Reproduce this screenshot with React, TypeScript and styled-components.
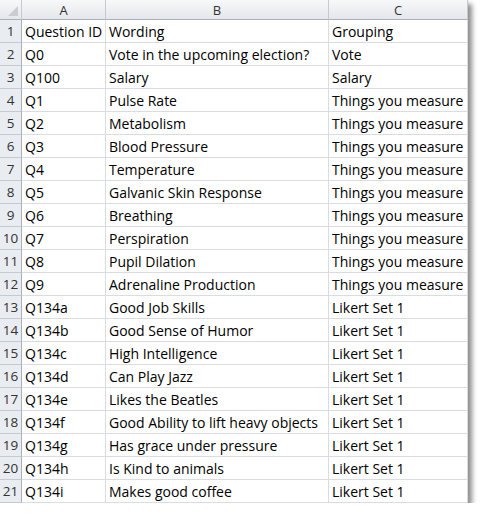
import React from "react";
import styled, { createGlobalStyle } from "styled-components";

const G = createGlobalStyle`
  body { margin: 0; background: #fff; font-family: "Open Sans", "Liberation Sans", sans-serif; }
`;
const Sheet = styled.div`
  width: 468px;
  box-shadow: 4px 4px 5px rgba(0,0,0,0.45);
  display: grid;
  grid-template-columns: 22px 84px 223px 139px;
  background: #fff;
`;
const Head = styled.div`
  height: 20px;
  background: linear-gradient(#f7f8fa, #e4e7eb);
  border-right: 1px solid #c5cad1;
  border-bottom: 1px solid #a9b0ba;
  box-sizing: border-box;
  font-size: 13px;
  color: #333;
  display: flex;
  align-items: center;
  justify-content: center;
  position: relative;
`;
const Tri = styled.div`
  position: absolute; right: 3px; bottom: 3px;
  width: 0; height: 0;
  border-left: 10px solid transparent;
  border-bottom: 10px solid #c9ccd1;
`;
const RowNum = styled.div`
  height: 23px;
  background: #e9ecf0;
  border-right: 1px solid #a9b0ba;
  border-bottom: 1px solid #c5cad1;
  box-sizing: border-box;
  font-size: 13.5px;
  color: #333;
  display: flex; align-items: center; justify-content: center;
`;
const Cell = styled.div`
  height: 23px;
  border-right: 1px solid #d9dde3;
  border-bottom: 1px solid #d9dde3;
  box-sizing: border-box;
  font-size: 14px;
  color: #000;
  padding: 1px 0 0 3px;
  display: flex; align-items: center;
  white-space: nowrap; overflow: hidden;
`;

const data: [string, string, string][] = [
  ["Question ID", "Wording", "Grouping"],
  ["Q0", "Vote in the upcoming election?", "Vote"],
  ["Q100", "Salary", "Salary"],
  ["Q1", "Pulse Rate", "Things you measure"],
  ["Q2", "Metabolism", "Things you measure"],
  ["Q3", "Blood Pressure", "Things you measure"],
  ["Q4", "Temperature", "Things you measure"],
  ["Q5", "Galvanic Skin Response", "Things you measure"],
  ["Q6", "Breathing", "Things you measure"],
  ["Q7", "Perspiration", "Things you measure"],
  ["Q8", "Pupil Dilation", "Things you measure"],
  ["Q9", "Adrenaline Production", "Things you measure"],
  ["Q134a", "Good Job Skills", "Likert Set 1"],
  ["Q134b", "Good Sense of Humor", "Likert Set 1"],
  ["Q134c", "High Intelligence", "Likert Set 1"],
  ["Q134d", "Can Play Jazz", "Likert Set 1"],
  ["Q134e", "Likes the Beatles", "Likert Set 1"],
  ["Q134f", "Good Ability to lift heavy objects", "Likert Set 1"],
  ["Q134g", "Has grace under pressure", "Likert Set 1"],
  ["Q134h", "Is Kind to animals", "Likert Set 1"],
  ["Q134i", "Makes good coffee", "Likert Set 1"],
];

export default function App() {
  return (
    <>
      <G />
      <Sheet>
        <Head><Tri /></Head>
        <Head>A</Head>
        <Head>B</Head>
        <Head>C</Head>
        {data.map((r, i) => (
          <React.Fragment key={i}>
            <RowNum>{i + 1}</RowNum>
            <Cell>{r[0]}</Cell>
            <Cell>{r[1]}</Cell>
            <Cell>{r[2]}</Cell>
          </React.Fragment>
        ))}
      </Sheet>
    </>
  );
}
